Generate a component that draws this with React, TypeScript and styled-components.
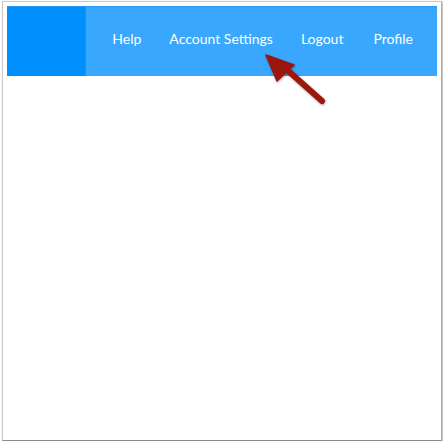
import * as React from 'react';
import styled, { createGlobalStyle } from 'styled-components';

const GlobalStyle = createGlobalStyle`
  html, body {
    margin: 0;
    padding: 0;
    background: #ffffff;
  }
  body {
    font-family: 'Lato', 'Liberation Sans', sans-serif;
  }
`;

const Frame = styled.div`
  position: relative;
  box-sizing: border-box;
  width: 440px;
  height: 440px;
  margin: 1px 0 0 2px;
  padding: 4px 4px 0 4px;
  background: #ffffff;
  border: 1px solid #c8c8c8;
  border-right-color: #b0b0b0;
  border-bottom-color: #8a8a8a;
  box-shadow: 1px 1px 2px rgba(0, 0, 0, 0.35);
`;

const Navbar = styled.header`
  display: flex;
  height: 70px;
  background: #38a7fd;
  border-top: 1px solid #2196f3;
  box-sizing: border-box;
`;

const Brand = styled.div`
  width: 78px;
  flex: none;
  background: #0090fe;
  border-right: 1px solid #2a8fe0;
`;

const NavList = styled.nav`
  flex: 1;
  display: flex;
  justify-content: flex-end;
  align-items: center;
  padding: 0 24px 6px 0;
`;

const NavLink = styled.a<{ $space: number }>`
  color: #ffffff;
  font-size: 14px;
  text-decoration: none;
  margin-left: ${p => p.$space}px;
  white-space: nowrap;
`;

const Pointer = styled.svg`
  position: absolute;
  left: 258px;
  top: 48px;
  overflow: visible;
`;

const links = [
  { label: 'Help', space: 0 },
  { label: 'Account Settings', space: 28 },
  { label: 'Logout', space: 28 },
  { label: 'Profile', space: 30 },
];

export default function App() {
  return (
    <>
      <GlobalStyle />
      <Frame>
        <Navbar>
          <Brand />
          <NavList>
            {links.map(l => (
              <NavLink key={l.label} href="#" $space={l.space}>{l.label}</NavLink>
            ))}
          </NavList>
        </Navbar>
        <Pointer width="70" height="60" viewBox="0 0 70 60">
          <defs>
            <filter id="sh" x="-20%" y="-20%" width="140%" height="140%">
              <feDropShadow dx="0.5" dy="1" stdDeviation="1" floodColor="#000" floodOpacity="0.35" />
            </filter>
          </defs>
          <g filter="url(#sh)">
            <line x1="24" y1="18" x2="61" y2="51" stroke="#9b1510" strokeWidth="6" strokeLinecap="round" />
            <polygon points="5,5 33,15 16,31" fill="#9b1510" stroke="#9b1510" strokeWidth="1.5" strokeLinejoin="round" />
          </g>
        </Pointer>
      </Frame>
    </>
  );
}
